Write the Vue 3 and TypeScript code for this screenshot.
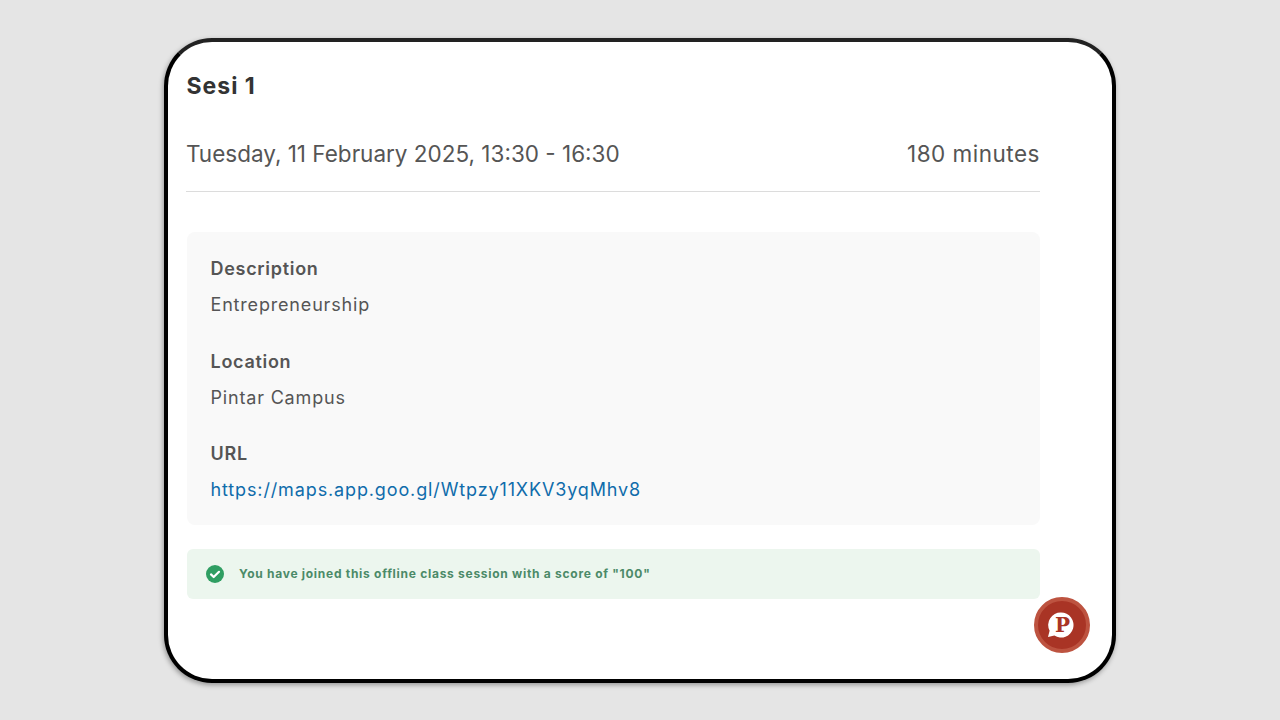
<script setup lang="ts">
interface Item { label: string; value: string; link?: boolean }
const items: Item[] = [
  { label: 'Description', value: 'Entrepreneurship' },
  { label: 'Location', value: 'Pintar Campus' },
  { label: 'URL', value: 'https://maps.app.goo.gl/Wtpzy11XKV3yqMhv8', link: true },
]
</script>

<template>
  <div class="page">
    <main class="frame">
      <div class="content">
        <h1 class="title">Sesi 1</h1>
        <div class="meta">
          <span>Tuesday, 11 February 2025, 13:30 - 16:30</span>
          <span class="duration">180 minutes</span>
        </div>
        <section class="card">
          <div v-for="item in items" :key="item.label" class="item">
            <div class="label">{{ item.label }}</div>
            <a v-if="item.link" class="value link" :href="item.value">{{ item.value }}</a>
            <div v-else class="value">{{ item.value }}</div>
          </div>
        </section>
        <div class="alert">
          <svg class="check" viewBox="0 0 18 18" width="18" height="18" aria-hidden="true">
            <circle cx="9" cy="9" r="9" fill="#2f9e62" />
            <path d="M5 9.4l2.7 2.6L13 6.8" fill="none" stroke="#fff" stroke-width="2.2" stroke-linecap="round" stroke-linejoin="round" />
          </svg>
          <span class="alert-text">You have joined this offline class session with a score of "100"</span>
        </div>
      </div>
      <button class="fab" aria-label="Chat">
        <svg class="bubble" viewBox="0 0 28 28" width="28" height="28" aria-hidden="true">
          <path d="M15 1.5a12.5 12.5 0 1 1-6.6 23.1L2 26l1.6-6.2A12.5 12.5 0 0 1 15 1.5z" fill="#fff" />
        </svg>
        <span class="p">P</span>
      </button>
    </main>
  </div>
</template>

<style>
html, body { margin: 0; background: #e5e5e5; }
</style>

<style scoped>
.page {
  width: 1280px;
  height: 720px;
  box-sizing: border-box;
  padding: 38px 164px 0;
  background: #e5e5e5;
  font-family: Inter, "Liberation Sans", sans-serif;
  overflow: hidden;
}
.frame {
  position: relative;
  width: 952px;
  height: 645px;
  box-sizing: border-box;
  background: #fff;
  border: 4px solid #000;
  border-top-color: #222;
  border-radius: 48px;
  box-shadow: -1px 2px 5px rgba(0, 0, 0, 0.35);
}
.content {
  width: 853.5px;
  margin-left: 18.5px;
  padding-top: 29px;
}
.title {
  margin: 0;
  font-size: 23px;
  line-height: 30px;
  font-weight: 700;
  letter-spacing: 1px;
  color: #333;
}
.meta {
  display: flex;
  justify-content: space-between;
  margin-top: 38px;
  margin-left: -0.5px;
  padding-bottom: 22px;
  border-bottom: 1px solid #dcdcdc;
  font-size: 22.5px;
  line-height: 30px;
  color: #555;
}
.duration { letter-spacing: 0.5px; }
.card {
  margin-top: 40px;
  padding: 25px 24px 0;
  height: 293px;
  box-sizing: border-box;
  background: #f9f9f9;
  border-radius: 8px;
  display: flex;
  flex-direction: column;
  gap: 32.5px;
}
.label {
  font-size: 18px;
  line-height: 24px;
  font-weight: 600;
  letter-spacing: 0.7px;
  color: #555;
}
.value {
  display: block;
  margin-top: 12px;
  font-size: 18px;
  line-height: 24px;
  letter-spacing: 0.82px;
  color: #555;
}
.link {
  color: #0f6cab;
  letter-spacing: 0.87px;
  text-decoration: none;
}
.alert {
  display: flex;
  align-items: center;
  gap: 15px;
  height: 50px;
  margin-top: 24px;
  padding-left: 19.5px;
  box-sizing: border-box;
  background: #ecf6ee;
  border-radius: 6px;
  font-size: 12px;
  font-weight: 700;
  letter-spacing: 0.72px;
  color: #4b8a68;
}
.alert-text { padding-bottom: 2px; }
.check { flex: none; }
.fab {
  position: absolute;
  left: 866px;
  top: 555px;
  width: 56px;
  height: 56px;
  padding: 0;
  box-sizing: border-box;
  border: 4px solid #bd5340;
  border-radius: 50%;
  background: #a93425;
}
.bubble {
  position: absolute;
  left: 8px;
  top: 10px;
}
.p {
  position: absolute;
  left: 1px;
  right: 0;
  top: 11px;
  text-align: center;
  font-family: "DejaVu Serif", serif;
  font-weight: 700;
  font-size: 20px;
  line-height: 26px;
  color: #a93425;
}
</style>
